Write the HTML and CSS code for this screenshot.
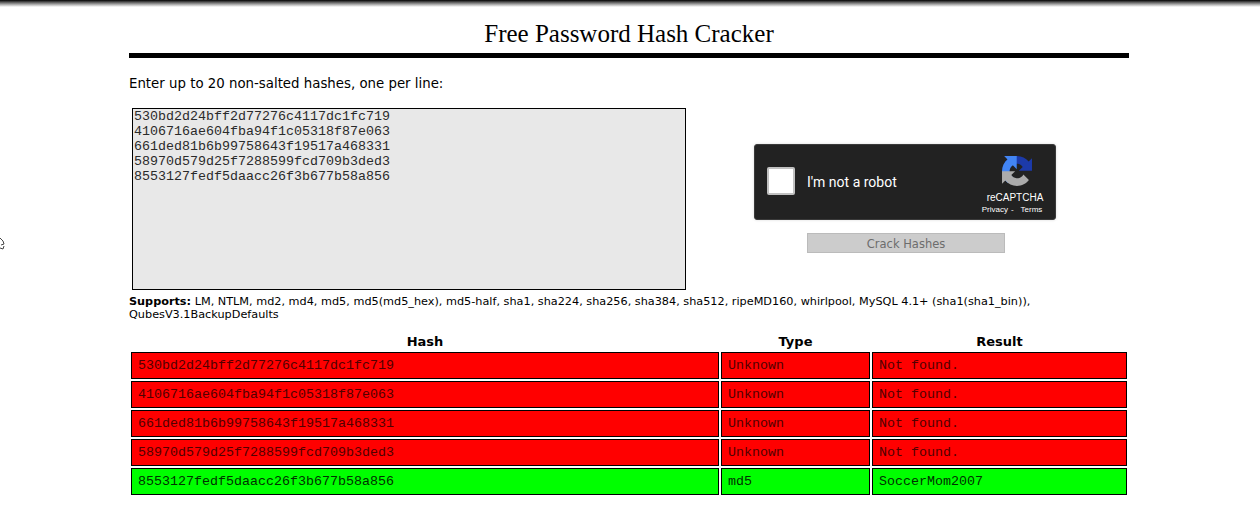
FILE: index.html
```html
<!DOCTYPE html>
<html lang="en">
<head>
  <meta charset="UTF-8" />
  <meta name="viewport" content="width=device-width, initial-scale=1.0" />
  <title>Free Password Hash Cracker</title>
  <link rel="stylesheet" href="styles.css">
</head>
<body>
  <div class="topbar"></div>
  <svg class="edge-mark" width="5" height="14" viewBox="0 0 5 14"><path d="M0 1 L3 4 L4 7 L1 8 M0 11 L3 12 L4 9" fill="none" stroke="#444" stroke-width="1"/></svg>

  <div class="page">
    <h1>Free Password Hash Cracker</h1>
    <div class="rule"></div>
    <p class="intro">Enter up to 20 non-salted hashes, one per line:</p>

    <div class="form-row">
      <textarea class="hashes" spellcheck="false">530bd2d24bff2d77276c4117dc1fc719
4106716ae604fba94f1c05318f87e063
661ded81b6b99758643f19517a468331
58970d579d25f7288599fcd709b3ded3
8553127fedf5daacc26f3b677b58a856</textarea>

      <div class="side">
        <div class="captcha">
          <div class="checkbox"></div>
          <div class="robot">I'm not a robot</div>
          <div class="brand">
            <svg class="logo" width="30" height="30" viewBox="0 0 64 64">
              <path d="M64 31.955l-.033-1.37V4.687l-7.16 7.16C50.948 4.674 42.033.093 32.05.093c-10.4 0-19.622 4.96-25.458 12.64l11.736 11.86a15.55 15.55 0 0 1 4.754-5.334C25.13 17.64 28.083 16.3 31.9 16.3c.46 0 .816.054 1.076.155 4.73.374 8.83 2.984 11.246 6.772l-8.307 8.307c10.522-.04 22.4-.066 28.085 0" fill="#1c3aa9"/>
              <path d="M31.862.094l-1.37.033H4.594l7.16 7.16C4.58 13.14 0 22.054 0 32.037c0 10.4 4.96 19.622 12.64 25.458L24.5 45.76a15.55 15.55 0 0 1-5.334-4.754c-1.617-2.19-2.958-5.142-2.958-8.96 0-.46.054-.816.155-1.076.374-4.73 2.984-8.83 6.772-11.246l8.307 8.307c-.04-10.522-.066-22.4 0-28.085" fill="#4285f4"/>
              <path d="M.001 32.045l.033 1.37v25.9l7.16-7.16c5.86 7.173 14.775 11.752 24.757 11.752 10.4 0 19.622-4.96 25.458-12.64l-11.736-11.86a15.55 15.55 0 0 1-4.754 5.334c-2.05 1.617-5.005 2.958-8.823 2.958-.46 0-.816-.054-1.076-.155-4.73-.374-8.83-2.984-11.246-6.772l8.307-8.307c-10.522.04-22.4.066-28.085 0" fill="#ababab"/>
            </svg>
            <div class="brand-name">reCAPTCHA</div>
            <div class="brand-links"><span>Privacy</span><span class="dash">-</span><span>Terms</span></div>
          </div>
        </div>
        <button class="crack" disabled>Crack Hashes</button>
      </div>
    </div>

    <p class="supports"><b>Supports:</b> LM, NTLM, md2, md4, md5, md5(md5_hex), md5-half, sha1, sha224, sha256, sha384, sha512, ripeMD160, whirlpool, MySQL 4.1+ (sha1(sha1_bin)), QubesV3.1BackupDefaults</p>

    <table class="results">
      <thead>
        <tr><th class="col-hash">Hash</th><th class="col-type">Type</th><th>Result</th></tr>
      </thead>
      <tbody>
        <tr class="miss"><td>530bd2d24bff2d77276c4117dc1fc719</td><td>Unknown</td><td>Not found.</td></tr>
        <tr class="miss"><td>4106716ae604fba94f1c05318f87e063</td><td>Unknown</td><td>Not found.</td></tr>
        <tr class="miss"><td>661ded81b6b99758643f19517a468331</td><td>Unknown</td><td>Not found.</td></tr>
        <tr class="miss"><td>58970d579d25f7288599fcd709b3ded3</td><td>Unknown</td><td>Not found.</td></tr>
        <tr class="hit"><td>8553127fedf5daacc26f3b677b58a856</td><td>md5</td><td>SoccerMom2007</td></tr>
      </tbody>
    </table>
  </div>
</body>
</html>
```

FILE: styles.css
```css
body {
  margin: 0;
  background: #fff;
  color: #000;
  font-family: "DejaVu Sans", sans-serif;
  overflow: hidden;
}
.topbar {
  height: 7px;
  background: linear-gradient(to bottom, #000, #555 30%, #bbb 70%, #fff);
}
.edge-mark {
  position: absolute;
  left: 0;
  top: 237px;
}
.page {
  width: 1000px;
  margin: 0 auto 0 129px;
}
h1 {
  margin: 0;
  padding-top: 12px;
  font-family: "Liberation Serif", serif;
  font-size: 25px;
  font-weight: normal;
  line-height: 29px;
  text-align: center;
}
.rule {
  height: 5px;
  margin-top: 5px;
  background: #000;
}
.intro {
  margin: 18px 0 0;
  font-size: 13.33px;
  line-height: 16px;
}
.form-row {
  display: flex;
  margin-top: 16px;
  padding-left: 3px;
}
.hashes {
  box-sizing: border-box;
  width: 554px;
  height: 182px;
  margin: 0;
  padding: 0 1px;
  border: 1px solid #000;
  border-radius: 0;
  background: #e8e8e8;
  color: #2a2a2a;
  font-family: "Liberation Mono", monospace;
  font-size: 13.33px;
  line-height: 15px;
  resize: none;
  outline: none;
}
.side {
  display: flex;
  flex-direction: column;
  align-items: center;
  margin-left: 68px;
  padding-top: 36px;
}
.captcha {
  box-sizing: border-box;
  display: flex;
  align-items: center;
  width: 302px;
  height: 76px;
  padding-left: 12px;
  border: 1px solid #3a3a3a;
  border-radius: 3px;
  background: #222;
  color: #fff;
  font-family: Roboto, sans-serif;
  box-shadow: 0 0 3px rgba(0, 0, 0, 0.15);
}
.checkbox {
  box-sizing: border-box;
  width: 28px;
  height: 28px;
  margin-bottom: 2px;
  border: 2px solid #c1c1c1;
  border-radius: 2px;
  background: #fff;
}
.robot {
  margin-left: 12px;
  font-size: 14px;
}
.brand {
  display: flex;
  flex-direction: column;
  align-items: center;
  width: 64px;
  margin-left: auto;
  margin-right: 8px;
  padding-top: 7px;
}
.logo {
  display: block;
  margin-left: 4px;
}
.brand-name {
  margin-top: 6px;
  font-family: "Liberation Sans", sans-serif;
  font-size: 10px;
  line-height: 12px;
}
.brand-links {
  display: flex;
  margin-right: 6px;
  font-family: "Liberation Sans", sans-serif;
  font-size: 8px;
  line-height: 11px;
  white-space: nowrap;
}
.dash {
  margin: 0 7px 0 3px;
}
.crack {
  box-sizing: border-box;
  width: 198px;
  height: 20px;
  margin: 13px 0 0 2px;
  padding: 1px 0 0;
  border: 1px solid #bbb;
  border-radius: 0;
  background: #ccc;
  color: #6d6d6d;
  font-family: "DejaVu Sans", sans-serif;
  font-size: 11.5px;
}
.supports {
  margin: 5px 0 0;
  font-size: 11.25px;
  line-height: 13px;
}
.results {
  width: 1000px;
  margin-top: 11px;
  border-collapse: separate;
  border-spacing: 2px;
  table-layout: fixed;
}
.results th {
  padding: 0 0 1px;
  font-size: 13px;
  line-height: 15px;
}
.col-hash {
  width: 588px;
}
.col-type {
  width: 149px;
}
.results td {
  height: 25px;
  padding: 0 0 0 6px;
  border: 1px solid #000;
  font-family: "Liberation Mono", monospace;
  font-size: 13.33px;
  line-height: 15px;
}
.miss td {
  background: #f00;
  color: #500000;
}
.hit td {
  background: #0f0;
  color: #003000;
}
```
